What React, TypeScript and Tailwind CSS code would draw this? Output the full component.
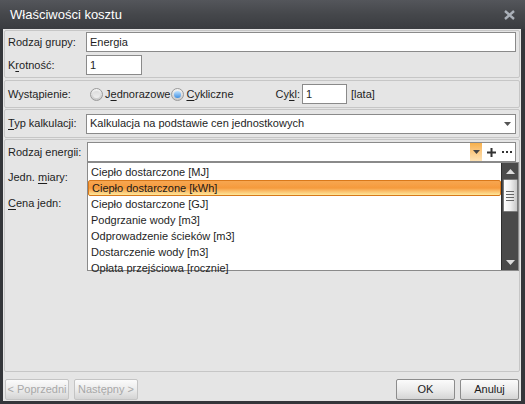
import React from "react";

const font = { fontFamily: '"Liberation Sans", Arial, sans-serif' };

function U({ children }: { children: React.ReactNode }) {
  return <span className="underline underline-offset-2">{children}</span>;
}

function Radio({ checked }: { checked?: boolean }) {
  return (
    <span className="flex h-[13px] w-[13px] items-center justify-center rounded-full border border-[#9a9a9a] bg-gradient-to-b from-[#f4f4f4] to-[#c9c9c9]">
      {checked ? (
        <span className="h-[7px] w-[7px] rounded-full bg-gradient-to-b from-[#bfe3ff] to-[#3d8fe0]" />
      ) : (
        <span className="h-[7px] w-[7px] rounded-full bg-gradient-to-b from-[#dcdcdc] to-[#efefef]" />
      )}
    </span>
  );
}

function Btn({ label, disabled, w }: { label: string; disabled?: boolean; w: string }) {
  return (
    <div
      className={`flex h-[21px] ${w} items-center justify-center whitespace-nowrap rounded-[2px] border bg-gradient-to-b from-[#fbfbfb] via-[#ececec] to-[#d4d4d4] ${
        disabled ? "border-[#c4c4c4] text-[#a8a8a8]" : "border-[#8c8c8c] text-[#1a1a1a]"
      }`}
    >
      {label}
    </div>
  );
}

const items = [
  "Ciepło dostarczone [MJ]",
  "Ciepło dostarczone [kWh]",
  "Ciepło dostarczone [GJ]",
  "Podgrzanie wody [m3]",
  "Odprowadzenie ścieków [m3]",
  "Dostarczenie wody [m3]",
  "Opłata przejściowa [rocznie]",
];

export default function App() {
  return (
    <div
      className="flex h-[404px] w-[525px] flex-col whitespace-nowrap bg-[#34363a] text-[11px] text-[#1e1e1e]"
      style={font}
    >
      {/* title bar */}
      <div className="flex h-[29px] shrink-0 items-center justify-between bg-gradient-to-b from-[#54565b] via-[#45474b] to-[#3a3c40] pl-[10px] pr-[10px]">
        <span className="text-[13px] text-white">Właściwości kosztu</span>
        <svg width="11" height="10" viewBox="0 0 11 10">
          <path d="M1 1 L10 9 M10 1 L1 9" stroke="#aab0b8" strokeWidth="2.4" />
        </svg>
      </div>

      {/* body */}
      <div className="mb-[3px] ml-[3px] mr-[4px] flex flex-1 flex-col bg-[#e5e5e5] px-[1px] pt-[1px]">
        <div className="flex flex-col gap-[1px]">
          {/* section 1 */}
          <div className="flex flex-col gap-[3px] rounded-[2px] border border-[#c6c6c6] px-[3px] pb-[2px] pt-[1px]">
            <div className="flex items-center">
              <span className="w-[78px]">Rodzaj grupy:</span>
              <div className="flex h-[20px] flex-1 items-center border border-[#8a8a8a] bg-white px-[3px]">Energia</div>
            </div>
            <div className="flex items-center">
              <span className="w-[78px]">
                K<U>r</U>otność:
              </span>
              <div className="flex h-[20px] w-[56px] items-center border border-[#8a8a8a] bg-white px-[3px]">1</div>
            </div>
          </div>

          {/* section 2 */}
          <div className="mt-[1px] flex h-[28px] items-center rounded-[2px] border border-[#c6c6c6] px-[3px]">
            <span className="w-[82px]">Wystąpienie:</span>
            <Radio />
            <span className="ml-[2px]">
              J<U>e</U>dnorazowe
            </span>
            <span className="ml-[1px]">
              <Radio checked />
            </span>
            <span className="ml-[2px]">
              <U>C</U>ykliczne
            </span>
            <span className="ml-[42px]">
              Cy<U>k</U>l:
            </span>
            <div className="ml-[2px] flex h-[20px] w-[45px] items-center border border-[#8a8a8a] bg-white px-[3px]">1</div>
            <span className="ml-[4px]">[lata]</span>
          </div>

          {/* section 3 */}
          <div className="flex h-[29px] items-center rounded-[2px] border border-[#c6c6c6] px-[3px]">
            <span className="w-[78px]">
              <U>T</U>yp kalkulacji:
            </span>
            <div className="flex h-[20px] flex-1 items-center justify-between border border-[#8a8a8a] bg-white pl-[3px] pr-[4px]">
              <span>Kalkulacja na podstawie cen jednostkowych</span>
              <svg width="7" height="4" viewBox="0 0 7 4">
                <path d="M0 0 H7 L3.5 4 Z" fill="#555" />
              </svg>
            </div>
          </div>
        </div>

        {/* section 4 */}
        <div className="relative mt-[1px] flex flex-1 flex-col rounded-[2px] border border-[#c6c6c6] px-[3px] pt-[2px]">
          <div className="flex items-center">
            <span className="w-[79px]">Rodzaj energii:</span>
            <div className="flex h-[20px] flex-1 items-center justify-end border border-[#8a8a8a] bg-white">
              <div className="flex h-[18px] w-[12px] items-center justify-center bg-gradient-to-b from-[#f7b04a] to-[#fde3b6]">
                <svg width="7" height="4" viewBox="0 0 7 4">
                  <path d="M0 0 H7 L3.5 4 Z" fill="#444" />
                </svg>
              </div>
              <span className="ml-[4px] flex w-[10px] justify-center">
                <svg width="9" height="9" viewBox="0 0 9 9">
                  <path d="M4.5 0 V9 M0 4.5 H9" stroke="#333" strokeWidth="2" />
                </svg>
              </span>
              <span className="ml-[6px] mr-[3px] flex gap-[2px]">
                <span className="h-[2px] w-[2px] bg-[#333]" />
                <span className="h-[2px] w-[2px] bg-[#333]" />
                <span className="h-[2px] w-[2px] bg-[#333]" />
              </span>
            </div>
          </div>
          <div className="mt-[7px]">
            Jedn. <U>m</U>iary:
          </div>
          <div className="mt-[9px]">
            <U>C</U>ena jedn:
          </div>

          {/* dropdown list */}
          <div className="absolute left-[82px] right-0 top-[22px] flex h-[109px] border border-[#8a8a8a] bg-white">
            <div className="flex flex-1 flex-col pt-[1px]">
              {items.map((t, i) => (
                <div
                  key={t}
                  className={`flex h-[16px] shrink-0 items-center px-[3px] ${
                    i === 1
                      ? "rounded-[2px] border border-[#d8781a] bg-gradient-to-b from-[#f7a650] via-[#f59a3c] to-[#fde79a] text-[#1a1a1a]"
                      : ""
                  }`}
                >
                  {t}
                </div>
              ))}
            </div>
            <div className="flex w-[17px] flex-col items-center border-l border-[#2e2e2e] bg-[#4a4a4a] py-[1px]">
              <div className="flex h-[15px] items-center">
                <svg width="9" height="5" viewBox="0 0 9 5">
                  <path d="M0 5 L4.5 0 L9 5 Z" fill="#dcdcdc" />
                </svg>
              </div>
              <div className="flex h-[33px] w-[15px] flex-col items-center justify-center gap-[2px] rounded-[1px] border border-[#7a7a7a] bg-gradient-to-r from-[#ffffff] via-[#eeeeee] to-[#c8c8c8]">
                <span className="h-[1px] w-[8px] bg-[#666]" />
                <span className="h-[1px] w-[8px] bg-[#666]" />
                <span className="h-[1px] w-[8px] bg-[#666]" />
                <span className="h-[1px] w-[8px] bg-[#666]" />
              </div>
              <div className="flex-1" />
              <div className="flex h-[14px] items-center">
                <svg width="9" height="5" viewBox="0 0 9 5">
                  <path d="M0 0 L4.5 5 L9 0 Z" fill="#dcdcdc" />
                </svg>
              </div>
            </div>
          </div>
        </div>

        {/* buttons */}
        <div className="flex shrink-0 items-center gap-[5px] px-[1px] pb-[1px] pt-[7px]">
          <Btn label="< Poprzedni" disabled w="w-[64px]" />
          <Btn label="Następny >" disabled w="w-[64px]" />
          <div className="flex-1" />
          <Btn label="OK" w="w-[59px]" />
          <Btn label="Anuluj" w="w-[59px]" />
        </div>
      </div>
    </div>
  );
}
